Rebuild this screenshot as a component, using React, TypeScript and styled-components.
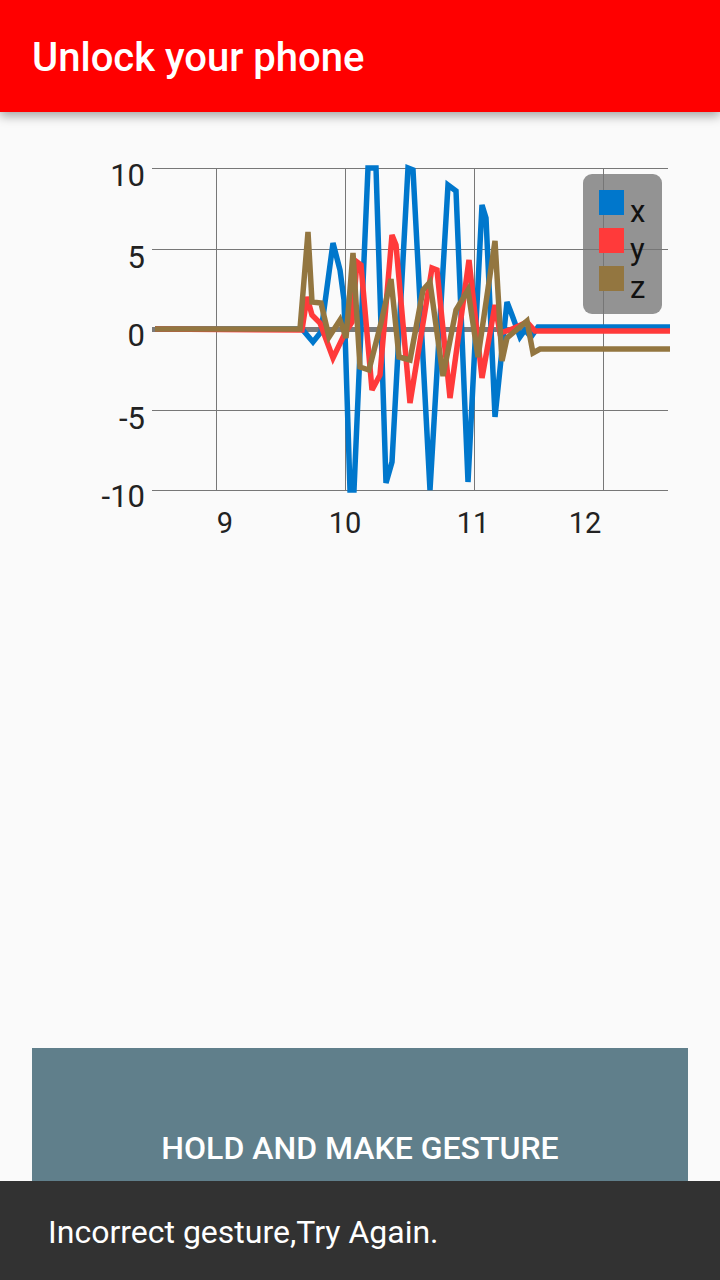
import React from "react";
import styled, { createGlobalStyle } from "styled-components";

const GlobalStyle = createGlobalStyle`
  html, body {
    margin: 0;
    padding: 0;
    background: #fafafa;
    font-family: Roboto, "Noto Sans", sans-serif;
  }
`;

const Screen = styled.div`
  position: relative;
  width: 720px;
  height: 1280px;
  display: flex;
  flex-direction: column;
  background: #fafafa;
  overflow: hidden;
`;

const AppBar = styled.header`
  height: 112px;
  flex-shrink: 0;
  display: flex;
  align-items: center;
  padding: 0 32px;
  background: #ff0000;
  box-shadow: 0 4px 10px rgba(0, 0, 0, 0.35);
  position: relative;
  z-index: 1;
`;

const Title = styled.h1`
  margin: 0;
  margin-top: 2px;
  color: #ffffff;
  font-size: 40px;
  font-weight: 500;
  letter-spacing: 0;
`;

const ChartBox = styled.div`
  margin-top: 38px;
  height: 400px;
  flex-shrink: 0;
`;

const Spacer = styled.div`
  flex: 1;
`;

const GestureButton = styled.button`
  margin: 0 32px 32px;
  height: 200px;
  flex-shrink: 0;
  border: none;
  background: #607f8b;
  color: #ffffff;
  font-family: Roboto, sans-serif;
  font-size: 32px;
  font-weight: 500;
  letter-spacing: 0;
`;

const Snackbar = styled.div`
  position: absolute;
  left: 0;
  right: 0;
  bottom: 0;
  height: 99px;
  display: flex;
  align-items: center;
  padding: 0 48px;
  background: #323232;
  color: #ffffff;
  font-size: 32px;
  padding-top: 2px;
  box-sizing: border-box;
`;

type Pt = [number, number];

const series: { color: string; pts: Pt[] }[] = [
  {
    color: "#0077cc",
    pts: [
      [155, 329], [302, 329], [313, 342], [321, 332], [333, 243], [340, 270],
      [344, 300], [350, 490], [354, 490], [368, 168], [376, 168], [386, 483],
      [392, 462], [408, 168], [413, 170], [430, 490], [448, 185], [456, 191],
      [468, 482], [482, 205], [486, 218], [495, 417], [507, 302], [512, 315],
      [520, 337], [525, 330], [531, 337], [538, 327], [670, 327],
    ],
  },
  {
    color: "#ff3a3a",
    pts: [
      [155, 329], [302, 330], [307, 297], [312, 315], [320, 323], [333, 358],
      [345, 333], [352, 322], [357, 262], [361, 265], [372, 390], [380, 375],
      [392, 235], [396, 245], [410, 403], [432, 268], [437, 270], [450, 398],
      [469, 260], [482, 378], [495, 305], [500, 333], [510, 330], [527, 322],
      [535, 331], [670, 331],
    ],
  },
  {
    color: "#937640",
    pts: [
      [155, 329], [300, 329], [308, 232], [312, 302], [321, 303], [329, 337],
      [340, 320], [346, 338], [353, 253], [360, 367], [369, 370], [380, 327],
      [391, 279], [399, 357], [410, 360], [423, 290], [430, 282], [443, 376],
      [456, 310], [468, 290], [478, 357], [495, 241], [502, 361], [507, 338],
      [527, 321], [533, 353], [540, 349], [670, 349],
    ],
  },
];

const gridY = [168, 249, 329, 410, 490];
const gridX = [216, 345, 474, 603];
const yLabels = [
  { v: "10", y: 175 },
  { v: "5", y: 257 },
  { v: "0", y: 335 },
  { v: "-5", y: 418 },
  { v: "-10", y: 496 },
];
const xLabels = [
  { v: "9", x: 225 },
  { v: "10", x: 345 },
  { v: "11", x: 473 },
  { v: "12", x: 585 },
];
const legend = [
  { name: "x", color: "#0077cc" },
  { name: "y", color: "#ff3a3a" },
  { name: "z", color: "#937640" },
];

const AccelChart = () => (
  <svg width="720" height="400" viewBox="0 150 720 400" style={{ display: "block" }}>
    {gridY.map((y) => (
      <line key={y} x1={152} x2={668} y1={y + 0.5} y2={y + 0.5} stroke="#777" strokeWidth={1} />
    ))}
    {gridX.map((x) => (
      <line key={x} x1={x + 0.5} x2={x + 0.5} y1={168} y2={490} stroke="#777" strokeWidth={1} />
    ))}
    <line x1={152} x2={668} y1={329.5} y2={329.5} stroke="#7a7a7a" strokeWidth={5} />
    {series.map((s) => (
      <polyline
        key={s.color}
        points={s.pts.map((p) => p.join(",")).join(" ")}
        fill="none"
        stroke={s.color}
        strokeWidth={5.5}
        strokeLinejoin="miter"
        strokeMiterlimit={3}
      />
    ))}
    {yLabels.map((l) => (
      <text
        key={l.v}
        x={145}
        y={l.y}
        textAnchor="end"
        dominantBaseline="central"
        fontFamily="Roboto, sans-serif"
        fontSize={31}
        fill="#222"
      >
        {l.v}
      </text>
    ))}
    {xLabels.map((l) => (
      <text
        key={l.v}
        x={l.x}
        y={523}
        textAnchor="middle"
        dominantBaseline="central"
        fontFamily="Roboto, sans-serif"
        fontSize={29}
        fill="#222"
      >
        {l.v}
      </text>
    ))}
    <rect x={583} y={174} width={79} height={140} rx={9} fill="rgba(118,118,118,0.78)" />
    {legend.map((l, i) => (
      <g key={l.name}>
        <rect x={599} y={190 + i * 38} width={25} height={25} fill={l.color} />
        <text
          x={630}
          y={222 + i * 38}
          fontFamily="Roboto, sans-serif"
          fontSize={31}
          fill="#111"
        >
          {l.name}
        </text>
      </g>
    ))}
  </svg>
);

export default function App() {
  return (
    <Screen>
      <GlobalStyle />
      <AppBar>
        <Title>Unlock your phone</Title>
      </AppBar>
      <ChartBox>
        <AccelChart />
      </ChartBox>
      <Spacer />
      <GestureButton>HOLD AND MAKE GESTURE</GestureButton>
      <Snackbar>Incorrect gesture,Try Again.</Snackbar>
    </Screen>
  );
}
